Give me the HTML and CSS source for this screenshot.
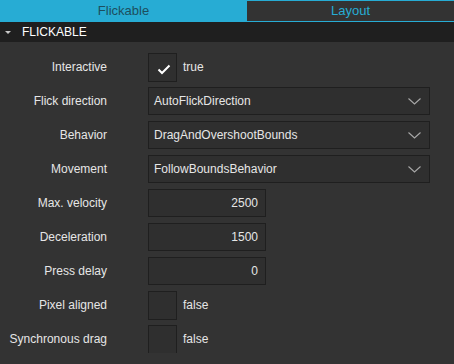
FILE: index.html
```html
<!DOCTYPE html>
<html lang="en">
<head>
    <meta charset="UTF-8">
    <title>Flickable</title>
    <link rel="stylesheet" href="styles.css">
</head>
<body>
    <div class="tabs">
        <div class="tab tab-active">Flickable</div>
        <div class="tab">Layout</div>
    </div>
    <div class="section-head">
        <span class="arrow"></span>
        <span class="section-title">FLICKABLE</span>
    </div>
    <div class="form">
        <div class="label">Interactive</div>
        <div class="field">
            <div class="check">
                <svg width="28" height="28" viewBox="0 0 28 28"><polyline points="9.5,15.5 13,19 20.5,11.5" fill="none" stroke="#fff" stroke-width="2"/></svg>
            </div>
            <span class="check-text">true</span>
        </div>

        <div class="label">Flick direction</div>
        <div class="field">
            <div class="combo">
                <span>AutoFlickDirection</span>
                <svg width="13" height="7" viewBox="0 0 13 7"><polyline points="0.5,0.5 6.5,6 12.5,0.5" fill="none" stroke="#a8a8a8" stroke-width="1.1"/></svg>
            </div>
        </div>

        <div class="label">Behavior</div>
        <div class="field">
            <div class="combo">
                <span>DragAndOvershootBounds</span>
                <svg width="13" height="7" viewBox="0 0 13 7"><polyline points="0.5,0.5 6.5,6 12.5,0.5" fill="none" stroke="#a8a8a8" stroke-width="1.1"/></svg>
            </div>
        </div>

        <div class="label">Movement</div>
        <div class="field">
            <div class="combo">
                <span>FollowBoundsBehavior</span>
                <svg width="13" height="7" viewBox="0 0 13 7"><polyline points="0.5,0.5 6.5,6 12.5,0.5" fill="none" stroke="#a8a8a8" stroke-width="1.1"/></svg>
            </div>
        </div>

        <div class="label">Max. velocity</div>
        <div class="field"><div class="num">2500</div></div>

        <div class="label">Deceleration</div>
        <div class="field"><div class="num">1500</div></div>

        <div class="label">Press delay</div>
        <div class="field"><div class="num">0</div></div>

        <div class="label">Pixel aligned</div>
        <div class="field">
            <div class="check"></div>
            <span class="check-text">false</span>
        </div>

        <div class="label">Synchronous drag</div>
        <div class="field">
            <div class="check"></div>
            <span class="check-text">false</span>
        </div>
    </div>
</body>
</html>
```
FILE: styles.css
```css
body{
    margin:0;
    background:#333333;
    font-family:"Liberation Sans", Arial, sans-serif;
    font-size:12px;
    color:#e6e6e6;
}
.tabs{
    display:flex;
    height:22px;
    background:#27acd4;
}
.tab{
    flex:1;
    margin:1px 0;
    background:#333333;
    color:#27acd4;
    text-align:center;
    line-height:20px;
    font-size:13px;
}
.tab-active{
    flex:none;
    width:247px;
    margin:0;
    background:#27acd4;
    color:#1d4f5e;
    line-height:22px;
}
.section-head{
    display:flex;
    align-items:center;
    height:20px;
    background:#1f1f1f;
}
.arrow{
    width:0;
    height:0;
    margin-left:5px;
    border-left:3px solid transparent;
    border-right:3px solid transparent;
    border-top:3px solid #c8c8c8;
}
.section-title{
    margin-left:11px;
    color:#ffffff;
    font-size:12px;
}
.form{
    display:grid;
    grid-template-columns:107px 1fr;
    column-gap:41px;
    row-gap:6px;
    padding-top:11px;
}
.label{
    height:28px;
    line-height:28px;
    text-align:right;
    white-space:nowrap;
}
.field{
    display:flex;
    align-items:center;
    height:28px;
}
.check{
    width:27px;
    height:27px;
    border:1px solid #1f1f1f;
    background:#2f2f2f;
    box-sizing:content-box;
}
.check svg{
    display:block;
}
.check-text{
    margin-left:6px;
}
.combo{
    display:flex;
    align-items:center;
    justify-content:space-between;
    width:280px;
    height:26px;
    padding:0 8px 0 5px;
    box-sizing:content-box;
    border:1px solid #1f1f1f;
    background:#2f2f2f;
    box-sizing:border-box;
    width:282px;
    height:28px;
}
.num{
    width:118px;
    height:28px;
    line-height:26px;
    box-sizing:border-box;
    padding-right:7px;
    border:1px solid #1f1f1f;
    background:#2f2f2f;
    text-align:right;
}
```
